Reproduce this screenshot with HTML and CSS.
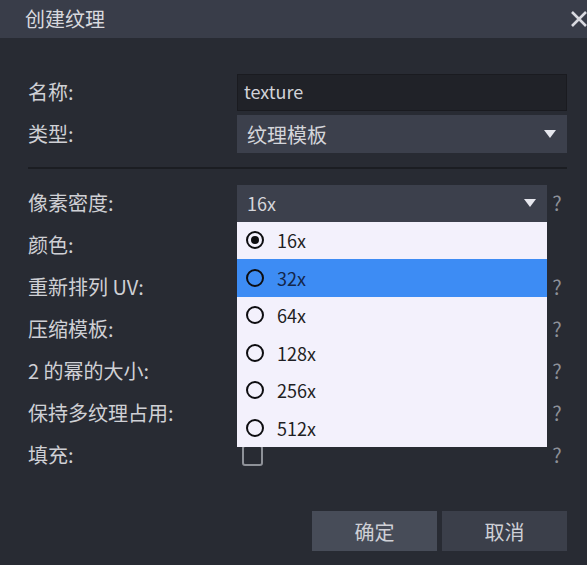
FILE: index.html
```html
<!DOCTYPE html>
<html lang="zh">
<head>
<meta charset="utf-8">
<title>创建纹理</title>
<link rel="stylesheet" href="styles.css">
</head>
<body>
<div class="dialog">
  <div class="titlebar">
    <span class="title">创建纹理</span>
    <svg class="close" width="18" height="18" viewBox="0 0 18 18"><path d="M2 2 L16 16 M16 2 L2 16" stroke="#d9dae0" stroke-width="2.6" fill="none"/></svg>
  </div>
  <div class="content">
    <div class="row">
      <span class="label">名称:</span>
      <div class="input">texture</div>
    </div>
    <div class="row">
      <span class="label">类型:</span>
      <div class="select big">纹理模板<span class="arrow"></span></div>
    </div>
    <div class="sep"></div>
    <div class="row">
      <span class="label">像素密度:</span>
      <div class="select small">16x<span class="arrow"></span>
        <ul class="menu">
          <li class="item"><span class="radio checked"></span>16x</li>
          <li class="item active"><span class="radio"></span>32x</li>
          <li class="item"><span class="radio"></span>64x</li>
          <li class="item"><span class="radio"></span>128x</li>
          <li class="item"><span class="radio"></span>256x</li>
          <li class="item"><span class="radio"></span>512x</li>
        </ul>
      </div>
      <span class="help">?</span>
    </div>
    <div class="row">
      <span class="label">颜色:</span>
      <div class="field"></div>
      <span class="help"></span>
    </div>
    <div class="row">
      <span class="label">重新排列 UV:</span>
      <div class="field"></div>
      <span class="help">?</span>
    </div>
    <div class="row">
      <span class="label">压缩模板:</span>
      <div class="field"></div>
      <span class="help">?</span>
    </div>
    <div class="row">
      <span class="label">2 的幂的大小:</span>
      <div class="field"></div>
      <span class="help">?</span>
    </div>
    <div class="row">
      <span class="label">保持多纹理占用:</span>
      <div class="field"></div>
      <span class="help">?</span>
    </div>
    <div class="row">
      <span class="label">填充:</span>
      <div class="field"><span class="checkbox"></span></div>
      <span class="help">?</span>
    </div>
    <div class="buttons">
      <button class="btn primary">确定</button>
      <button class="btn">取消</button>
    </div>
  </div>
</div>
</body>
</html>
```

FILE: styles.css
```css
html, body {
  margin: 0;
  padding: 0;
  background: #282b33;
  overflow: hidden;
}
body {
  font-family: "Noto Sans CJK SC", "Noto Sans", sans-serif;
  color: #cfd0d5;
  width: 587px;
  height: 565px;
}
.titlebar {
  height: 38px;
  background: #393d49;
  display: flex;
  align-items: center;
  padding-left: 25px;
}
.title {
  font-size: 20px;
  color: #d8d9de;
  line-height: 1;
}
.close {
  margin-left: auto;
  margin-right: -1px;
}
.content {
  padding: 35px 20px 0 28px;
}
.row {
  display: flex;
  align-items: center;
  height: 38px;
  margin-bottom: 4px;
}
.label {
  width: 209px;
  flex: none;
  font-size: 20px;
  line-height: 1;
  color: #cfd0d5;
}
.input {
  flex: 1;
  height: 37px;
  box-sizing: border-box;
  background: #202228;
  border: 1px solid #1a1b20;
  font-size: 18px;
  line-height: 33px;
  padding-left: 6px;
  color: #d2d3d8;
}
.select {
  position: relative;
  flex: 1;
  height: 38px;
  background: #3c404c;
  display: flex;
  align-items: center;
  padding-left: 10px;
  color: #d4d5da;
}
.select.big { font-size: 20px; }
.select.small { font-size: 18px; height: 37px; }
.arrow {
  position: absolute;
  right: 11px;
  top: 50%;
  margin-top: -4px;
  width: 0;
  height: 0;
  border-left: 6.5px solid transparent;
  border-right: 6.5px solid transparent;
  border-top: 8px solid #e6e7ee;
}
.sep {
  height: 2px;
  background: #1b1d22;
  margin: 14px 0 15px;
}
.field {
  flex: 1;
  height: 38px;
  display: flex;
  align-items: center;
}
.help {
  width: 20px;
  flex: none;
  text-align: center;
  font-size: 20px;
  color: #8d9098;
  line-height: 1;
}
.checkbox {
  width: 21px;
  height: 21px;
  box-sizing: border-box;
  border: 2px solid #8e9198;
  border-radius: 3px;
  margin-left: 5px;
}
.menu {
  position: absolute;
  left: 0;
  top: 37px;
  width: 100%;
  margin: 0;
  padding: 0;
  list-style: none;
  background: #f3f1fc;
  z-index: 5;
}
.item {
  height: 37.5px;
  display: flex;
  align-items: center;
  padding-left: 9px;
  font-size: 18px;
  color: #1f1f24;
}
.item.active {
  background: #3d8cf4;
  color: #14264a;
}
.radio {
  width: 18px;
  height: 18px;
  box-sizing: border-box;
  border: 2px solid #0d0d10;
  border-radius: 50%;
  margin-right: 13px;
  display: flex;
  align-items: center;
  justify-content: center;
}
.radio.checked::after {
  content: "";
  width: 8px;
  height: 8px;
  border-radius: 50%;
  background: #0d0d10;
}
.buttons {
  display: flex;
  justify-content: flex-end;
  gap: 5px;
  margin-top: 37px;
}
.btn {
  width: 125px;
  height: 40px;
  border: none;
  background: #3b3f4a;
  color: #cfd0d6;
  font-family: "Noto Sans CJK SC", sans-serif;
  font-size: 20px;
  padding: 0;
}
.btn.primary {
  background: #474c58;
}
```
